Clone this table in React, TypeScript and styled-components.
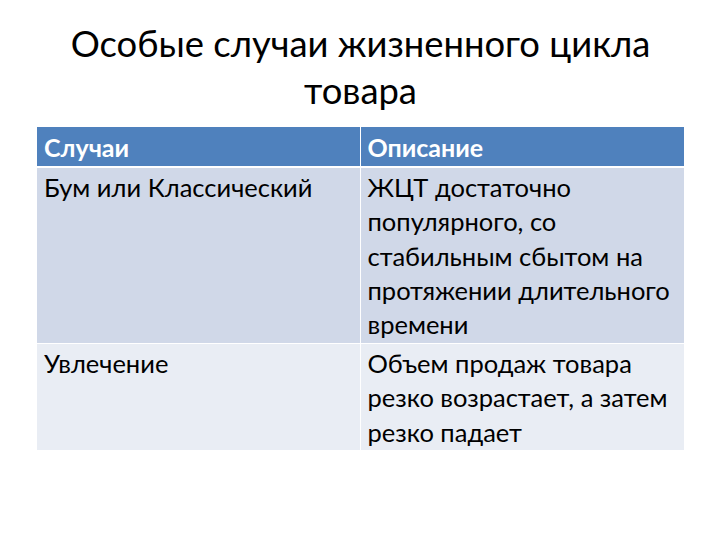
import React from 'react';
import styled, { createGlobalStyle } from 'styled-components';

const GlobalStyle = createGlobalStyle`
  html, body {
    margin: 0;
    padding: 0;
    background: #ffffff;
  }
  body {
    font-family: Lato, "Noto Sans", sans-serif;
    color: #000000;
  }
`;

const Slide = styled.div`
  width: 720px;
  height: 540px;
  box-sizing: border-box;
  padding: 20px 36px 0 37px;
  display: flex;
  flex-direction: column;
  align-items: stretch;
`;

const Title = styled.h1`
  margin: 0 0 13px 0;
  font-weight: 400;
  font-size: 36.4px;
  line-height: 47px;
  text-align: center;
`;

const Table = styled.table`
  width: 647px;
  border-collapse: collapse;
  table-layout: fixed;
`;

const HeadCell = styled.th`
  background: #4f81bd;
  color: #ffffff;
  font-weight: 700;
  font-size: 25px;
  text-align: left;
  height: 39px;
  padding: 0 7px;
  border-left: 1px solid #ffffff;
  border-bottom: 2px solid #ffffff;
  &:first-child {
    border-left: none;
  }
`;

const Row = styled.tr<{ $shade: string }>`
  background: ${({ $shade }) => $shade};
`;

const Cell = styled.td`
  vertical-align: top;
  font-size: 25.5px;
  line-height: 34.3px;
  padding: 2px 7px 1.5px 7px;
  border-left: 1px solid #ffffff;
  border-bottom: 1px solid #ffffff;
  white-space: nowrap;
  &:first-child {
    border-left: none;
  }
`;

const rows = [
  {
    shade: '#d0d8e8',
    name: 'Бум или Классический',
    text: ['ЖЦТ достаточно', 'популярного, со', 'стабильным сбытом на', 'протяжении длительного', 'времени'],
  },
  {
    shade: '#e9edf4',
    name: 'Увлечение',
    text: ['Объем продаж товара', 'резко возрастает, а затем', 'резко падает'],
  },
];

export default function App() {
  return (
    <>
      <GlobalStyle />
      <Slide>
        <Title>
          Особые случаи жизненного цикла
          <br />
          товара
        </Title>
        <Table>
          <colgroup>
            <col style={{ width: 323 }} />
            <col style={{ width: 324 }} />
          </colgroup>
          <thead>
            <tr>
              <HeadCell>Случаи</HeadCell>
              <HeadCell>Описание</HeadCell>
            </tr>
          </thead>
          <tbody>
            {rows.map((r) => (
              <Row key={r.name} $shade={r.shade}>
                <Cell>{r.name}</Cell>
                <Cell>
                  {r.text.map((line, i) => (
                    <React.Fragment key={i}>
                      {line}
                      {i < r.text.length - 1 && <br />}
                    </React.Fragment>
                  ))}
                </Cell>
              </Row>
            ))}
          </tbody>
        </Table>
      </Slide>
    </>
  );
}
